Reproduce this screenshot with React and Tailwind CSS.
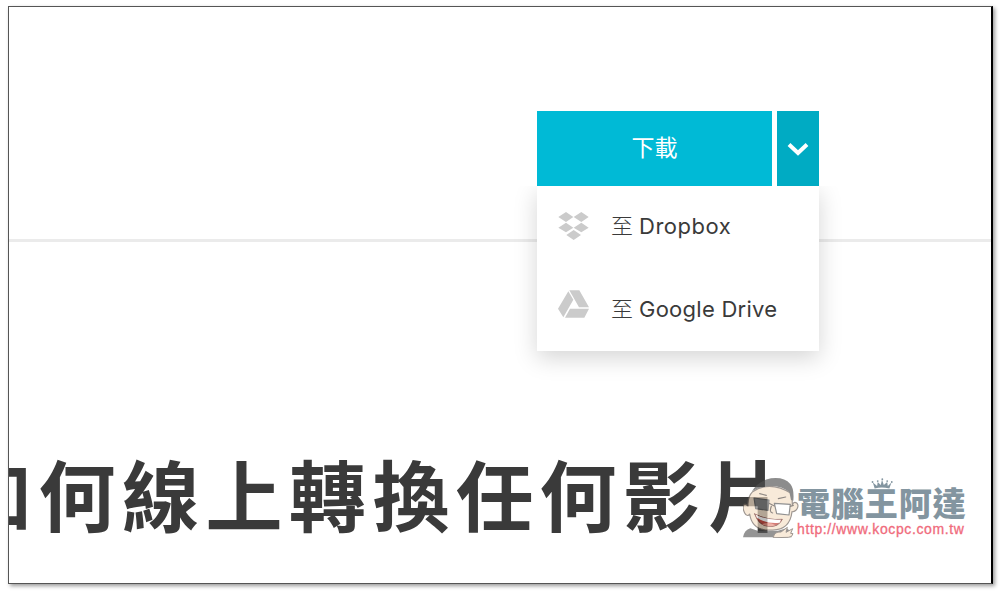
function DropboxIcon() {
  return (
    <svg className="h-7 w-[31px] shrink-0 fill-[#cbcbcb]" viewBox="0 0 93 84">
      <path d="M24 0 46 15 24 30 1 15Z M70 0 92 15 70 30 47 15Z M24 32 46 47 24 61 1 47Z M70 32 92 47 70 61 47 47Z M47 54 69 69 47 84 25 69Z" />
    </svg>
  )
}

function DriveIcon() {
  return (
    <svg className="mb-[10px] h-7 w-[31px] shrink-0 fill-[#cbcbcb]" viewBox="0 0 93 84">
      <path d="M31 4 46 29 16 82 0 56Z M34 1H64L93 52H63Z M36 56H93L79 83H21Z" />
    </svg>
  )
}

function MenuItem({ icon, name, spacing }) {
  return (
    <button className="flex h-[83px] w-full items-center pl-[21px] text-left text-[22px] text-[#3a3a3a]">
      {icon}
      <span className="mb-[4px] ml-[22px] mr-[6px] font-['Noto_Sans_CJK_TC',sans-serif] font-light leading-none">至</span>
      <span className={`whitespace-nowrap font-['Inter','Liberation_Sans',sans-serif] leading-none ${spacing}`}>{name}</span>
    </button>
  )
}

function DownloadButton() {
  return (
    <div className="relative flex w-[282px] gap-[5px]">
      <button className="h-[75px] w-[235px] bg-[#00bad6] pb-[5px] font-['Noto_Sans_CJK_TC',sans-serif] text-[23px] font-normal text-white">
        下載
      </button>
      <button className="flex h-[75px] w-[42px] items-center justify-center bg-[#00abc3]">
        <svg className="mt-px h-[14px] w-[22px] fill-none stroke-white stroke-[4]" viewBox="0 0 22 14">
          <path d="M2 2.5 11 11 20 2.5" />
        </svg>
      </button>
      <div className="absolute left-0 top-[75px] h-[165px] w-[282px] bg-white shadow-[0_7px_22px_rgba(0,0,0,0.17)] [clip-path:inset(0_-40px_-50px_-40px)]">
        <div className="-mt-0.5">
          <MenuItem icon={<DropboxIcon />} name="Dropbox" spacing="tracking-[0.5px]" />
          <MenuItem icon={<DriveIcon />} name="Google Drive" spacing="tracking-[0.25px]" />
        </div>
      </div>
    </div>
  )
}

function Mascot() {
  return (
    <svg className="h-[60px] w-14 shrink-0" viewBox="0 0 168 180" strokeLinecap="round" strokeLinejoin="round">
      <g opacity="0.65">
        <path d="M0 178Q4 156 22 151L48 160 105 158 130 151Q144 157 146 178Z" fill="#5c5c5c" />
        <path d="M15 84C0 68-3 90 5 105 10 116 18 113 20 108 25 143 49 158 84 156 120 158 143 139 147 101 161 103 170 83 161 75 154 70 149 75 148 82L147 47Q80 6 29 41Q13 57 15 84Z" fill="#f5dfc6" stroke="#6b6058" strokeWidth="3.5" />
        <path d="M27 40Q45 8 84 1 123-4 142 18 154 32 151 68L144 66 139 42Q116 24 87 24 50 25 27 40Z" fill="#505050" />
        <path d="M33 60 78 66 75 97 38 92Z" fill="#777" stroke="#555" strokeWidth="3.5" />
        <path d="M94 76 142 79 138 111 101 107Z" fill="white" stroke="#555" strokeWidth="3.5" />
        <path d="M78 76 94 84M142 85 151 82M50 47 70 52M106 62 128 57M85 85Q78 103 89 105" fill="none" stroke="#554b43" strokeWidth="3.5" />
        <path d="M35 108Q73 128 118 124 106 148 78 145 47 144 35 108Z" fill="#c0392f" stroke="#6d3028" strokeWidth="3" />
        <path d="M38 110Q74 128 114 125L110 134Q70 138 42 119Z" fill="white" />
        <path d="M56 139Q77 129 98 142Q77 149 56 139Z" fill="#e58a79" />
        <path d="M91 178Q94 160 114 162L133 148 129 163 149 152 143 166 150 167Q148 178 137 178Z" fill="#f5dfc6" stroke="#6b6058" strokeWidth="3" />
      </g>
    </svg>
  )
}

function Crown() {
  return (
    <svg className="absolute left-[74px] top-0 h-[11px] w-[22px] fill-[#8395a0]" viewBox="0 0 72 36">
      <path d="M12 34 6 15 20 26 22 13 32 23 36 6 42 23 53 13 55 26 67 15 60 34Q35 28 12 34Z" />
      <circle cx="5" cy="13" r="3" /><circle cx="22" cy="10" r="3" /><circle cx="37" cy="4" r="3" />
      <circle cx="53" cy="10" r="3" /><circle cx="68" cy="13" r="3" />
    </svg>
  )
}

function Watermark() {
  return (
    <div className="absolute left-[734px] top-[471px] flex">
      <Mascot />
      <div className="relative -ml-0.5 w-[170px]">
        <Crown />
        <div className="mt-[6px] whitespace-nowrap font-['Noto_Sans_CJK_TC',sans-serif] text-[33px] font-black leading-[36px] tracking-[0.9px] text-[#8395a0]">電腦王阿達</div>
        <div className="mt-[2px] whitespace-nowrap font-['Liberation_Sans',sans-serif] text-[14px] leading-[15px] tracking-[0.62px] text-[#f06b7c] [-webkit-text-stroke:0.3px_#f06b7c]">http://www.kocpc.com.tw</div>
      </div>
    </div>
  )
}

export default function App() {
  return (
    <div className="h-[591px] w-[1000px] overflow-hidden bg-white pl-2 pt-1.5">
      <main className="relative h-[578px] w-[985px] overflow-hidden border border-r-2 border-[#555] border-r-black bg-white shadow-[2px_2px_4px_rgba(0,0,0,0.4)]">
        <section className="h-[235px] border-b-[3px] border-[#ebebeb] pl-[528px] pt-[104px]">
          <DownloadButton />
        </section>
        <h1 className="-ml-[54px] mt-[193px] whitespace-nowrap font-['Noto_Sans_CJK_TC',sans-serif] text-[77px] font-bold leading-[116px] tracking-[6.5px] text-[#3a3a3a]">
          如何線上轉換任何影片
        </h1>
        <Watermark />
      </main>
    </div>
  )
}
